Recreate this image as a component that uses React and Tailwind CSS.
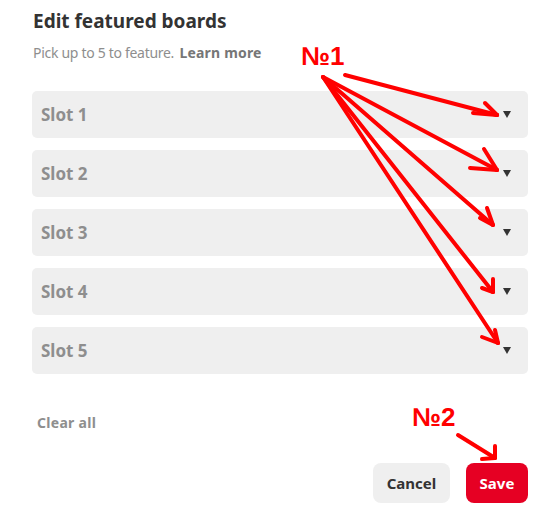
import React from "react";

const slots = ["Slot 1", "Slot 2", "Slot 3", "Slot 4", "Slot 5"];

// red hand-drawn annotation arrows: [start, tip, barb1, barb2]
const arrows = [
  [[345, 75], [497, 115], [485, 103], [473, 113]],
  [[323, 77], [497, 170], [484, 149], [470, 168]],
  [[323, 77], [493, 225], [487, 208], [480, 218]],
  [[323, 77], [493, 292], [493, 279], [482, 288]],
  [[323, 77], [498, 343], [495, 330], [482, 337]],
  [[458, 435], [495, 458], [495, 446], [482, 459]],
];

const Caret = () => (
  <svg width="8" height="7" viewBox="0 0 8 7" className="shrink-0">
    <path d="M0 0 H8 L4 7 Z" fill="#333" />
  </svg>
);

const App = () => {
  return (
    <div
      className="relative w-[555px] h-[532px] bg-white pl-[32px] pr-[27px] pt-[8px]"
      style={{ fontFamily: '"Noto Sans", "Open Sans", sans-serif' }}
    >
      <h2 className="pl-px text-[19px] leading-[26px] font-bold text-[#333]">
        Edit featured boards
      </h2>
      <p className="mt-[9px] pl-px text-[14px] leading-[19px] text-[#8e8e8e] tracking-[-0.3px]">
        Pick up to 5 to feature.{" "}
        <span className="font-bold ml-[2px] text-[#767676] tracking-[0.2px]">Learn more</span>
      </p>

      <div className="mt-[29px] flex flex-col gap-[12px]">
        {slots.map((s) => (
          <div
            key={s}
            className="h-[47px] rounded-[5px] bg-[#efefef] flex items-center justify-between pl-[9px] pr-[17px]"
          >
            <span className="text-[17px] font-bold text-[#8e8e8e] pt-[1px]">{s}</span>
            <Caret />
          </div>
        ))}
      </div>

      <button className="mt-[39px] ml-[5px] block text-[14px] leading-[20px] font-bold text-[#8e8e8e] tracking-[0.3px]">
        Clear all
      </button>

      <div className="mt-[30px] flex justify-end gap-[16px]">
        <button className="h-[40px] w-[77px] rounded-[8px] bg-[#efefef] text-[15px] font-bold text-[#333]">
          Cancel
        </button>
        <button className="h-[40px] w-[62px] rounded-[8px] bg-[#e60023] text-[15px] font-bold text-white">
          Save
        </button>
      </div>

      <span
        className="absolute left-[301px] top-[41px] text-[26px] leading-[30px] font-bold text-[#ff0000]"
        style={{ fontFamily: '"Liberation Sans", Arial, sans-serif' }}
      >
        №1
      </span>
      <span
        className="absolute left-[412px] top-[402px] text-[26px] leading-[30px] font-bold text-[#ff0000]"
        style={{ fontFamily: '"Liberation Sans", Arial, sans-serif' }}
      >
        №2
      </span>

      <svg
        className="absolute inset-0 pointer-events-none"
        width="555"
        height="532"
        viewBox="0 0 555 532"
      >
        {arrows.map(([a, t, b1, b2], i) => (
          <g
            key={i}
            stroke="#ff0000"
            strokeWidth="4"
            strokeLinecap="round"
            fill="none"
          >
            <line x1={a[0]} y1={a[1]} x2={t[0]} y2={t[1]} />
            <line x1={b1[0]} y1={b1[1]} x2={t[0]} y2={t[1]} />
            <line x1={b2[0]} y1={b2[1]} x2={t[0]} y2={t[1]} />
          </g>
        ))}
      </svg>
    </div>
  );
};

export default App;
